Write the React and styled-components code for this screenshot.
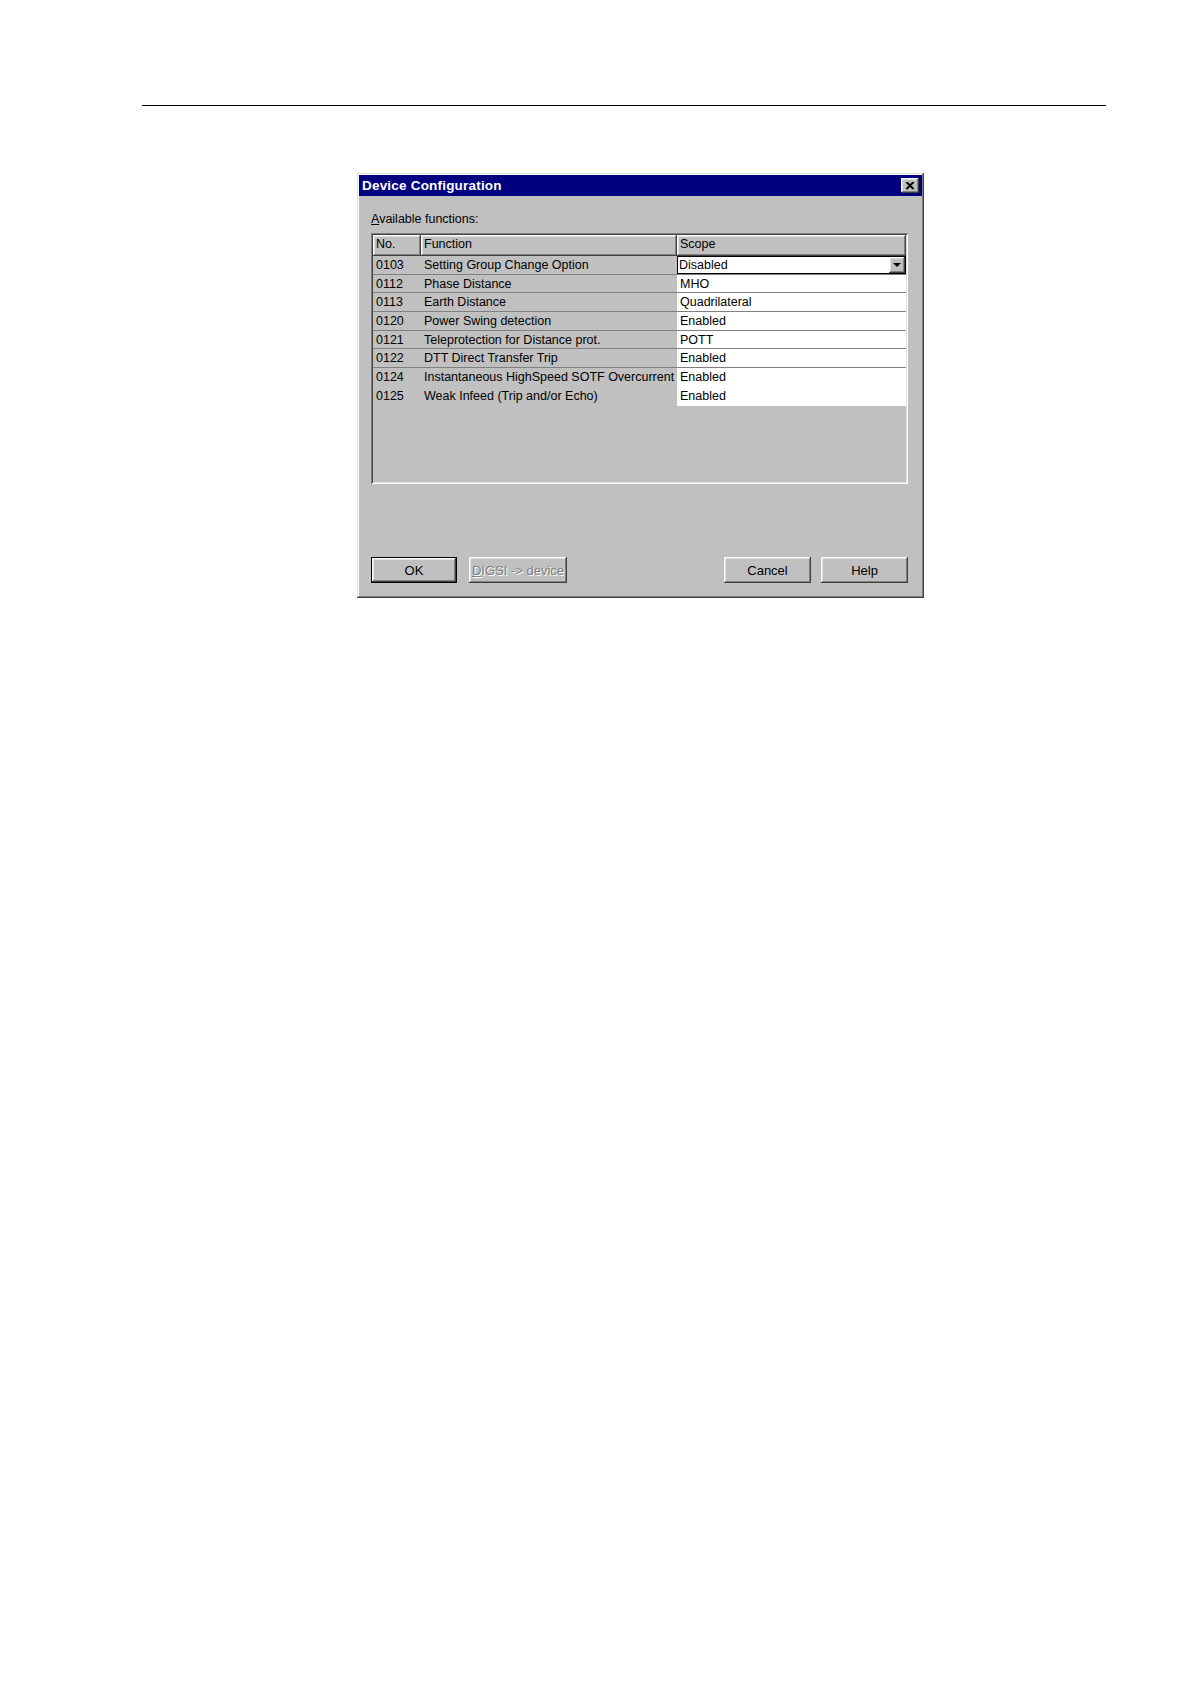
import React from "react";
import styled, { createGlobalStyle } from "styled-components";

const GlobalStyle = createGlobalStyle`
  html, body {
    margin: 0;
    padding: 0;
    background: #ffffff;
  }
  body {
    font-family: "Liberation Sans", Arial, sans-serif;
  }
`;

const raised = `
  box-shadow: inset -1px -1px #404040, inset 1px 1px #ffffff,
    inset -2px -2px #808080, inset 2px 2px #dfdfdf;
`;

const Page = styled.div`
  min-height: 1682px;
  background: #fff;
  padding-top: 105px;
  box-sizing: border-box;
`;

const Rule = styled.div`
  margin-left: 142px;
  width: 964px;
  height: 1px;
  background: #000;
`;

const Dialog = styled.div`
  margin: 67px 0 0 357px;
  width: 567px;
  height: 425px;
  box-sizing: border-box;
  background: #c0c0c0;
  padding: 2px;
  display: flex;
  flex-direction: column;
  box-shadow: inset -1px -1px #404040, inset 1px 1px #dfdfdf,
    inset -2px -2px #808080, inset 2px 2px #ffffff;
`;

const TitleBar = styled.div`
  height: 21px;
  background: #000080;
  display: flex;
  align-items: center;
  justify-content: space-between;
  padding: 0 3px 0 3px;
`;

const Title = styled.span`
  color: #fff;
  font-weight: bold;
  font-size: 13.5px;
  letter-spacing: 0.2px;
`;

const CloseButton = styled.div`
  width: 18px;
  height: 15px;
  background: #c0c0c0;
  display: flex;
  align-items: center;
  justify-content: center;
  ${raised}
`;

const Body = styled.div`
  flex: 1;
  display: flex;
  flex-direction: column;
  padding: 15px 14px 13px 12px;
`;

const Label = styled.div`
  font-size: 12.5px;
  line-height: 16px;
  color: #000;
  margin-bottom: 6px;
  u {
    text-decoration: underline;
  }
`;

const Grid = styled.div`
  height: 251px;
  box-sizing: border-box;
  padding: 2px;
  background: #c0c0c0;
  box-shadow: inset 1px 1px #808080, inset -1px -1px #ffffff,
    inset 2px 2px #404040, inset -2px -2px #dfdfdf;
`;

const HeaderRow = styled.div`
  display: flex;
  height: 21px;
`;

const HeadCell = styled.div`
  width: ${p => p.w}px;
  flex: ${p => (p.grow ? 1 : "none")};
  box-sizing: border-box;
  padding: 0 4px 3px 3px;
  display: flex;
  align-items: center;
  font-size: 12.5px;
  color: #000;
  ${raised}
`;

const Row = styled.div`
  display: flex;
  height: 18.7px;
  box-sizing: border-box;
  border-bottom: ${p => (p.line ? "1px solid #808080" : "none")};
`;

const Cell = styled.div`
  width: ${p => p.w}px;
  flex: none;
  box-sizing: border-box;
  padding-left: ${p => p.pad}px;
  display: flex;
  align-items: center;
  font-size: 12.5px;
  color: #000;
  white-space: nowrap;
`;

const ScopeCell = styled.div`
  flex: 1;
  background: #fff;
  box-sizing: border-box;
  padding-left: 3px;
  display: flex;
  align-items: center;
  font-size: 12.5px;
  color: #000;
`;

const Combo = styled.div`
  flex: 1;
  display: flex;
  align-items: stretch;
  background: #fff;
  border: 1px solid #000;
  box-sizing: border-box;
  font-size: 12.5px;
  color: #000;
`;

const ComboText = styled.span`
  flex: 1;
  display: flex;
  align-items: center;
  padding-left: 1px;
`;

const ComboArrow = styled.div`
  width: 16px;
  background: #c0c0c0;
  display: flex;
  align-items: center;
  justify-content: center;
  ${raised}
  &::after {
    content: "";
    border-left: 4px solid transparent;
    border-right: 4px solid transparent;
    border-top: 4px solid #000;
  }
`;

const ButtonBar = styled.div`
  margin-top: auto;
  display: flex;
  align-items: center;
`;

const Button = styled.div`
  width: ${p => p.w}px;
  height: 26px;
  box-sizing: border-box;
  margin-right: ${p => p.gap || 0}px;
  margin-left: ${p => (p.push ? "auto" : "0")};
  background: #c0c0c0;
  display: flex;
  align-items: center;
  justify-content: center;
  font-size: 13px;
  white-space: nowrap;
  color: ${p => (p.disabled ? "#808080" : "#000")};
  text-shadow: ${p => (p.disabled ? "1px 1px #ffffff" : "none")};
  ${p =>
    p.primary
      ? `box-shadow: inset 0 0 0 1px #000, inset -2px -2px #404040, inset 2px 2px #ffffff,
    inset -3px -3px #808080, inset 3px 3px #dfdfdf;`
      : raised}
`;

const rows = [
  ["0103", "Setting Group Change Option", "Disabled"],
  ["0112", "Phase Distance", "MHO"],
  ["0113", "Earth Distance", "Quadrilateral"],
  ["0120", "Power Swing detection", "Enabled"],
  ["0121", "Teleprotection for Distance prot.", "POTT"],
  ["0122", "DTT Direct Transfer Trip", "Enabled"],
  ["0124", "Instantaneous HighSpeed SOTF Overcurrent", "Enabled"],
  ["0125", "Weak Infeed (Trip and/or Echo)", "Enabled"],
];

export default function App() {
  return (
    <Page>
      <GlobalStyle />
      <Rule />
      <Dialog>
        <TitleBar>
          <Title>Device Configuration</Title>
          <CloseButton>
            <svg width="9" height="8" viewBox="0 0 9 8">
              <path d="M1 0 L8 7 M8 0 L1 7 M0 0 L7 7 M7 0 L0 7" stroke="#000" strokeWidth="1.3" />
            </svg>
          </CloseButton>
        </TitleBar>
        <Body>
          <Label>
            <u>A</u>vailable functions:
          </Label>
          <Grid>
            <HeaderRow>
              <HeadCell w={48}>No.</HeadCell>
              <HeadCell w={256}>Function</HeadCell>
              <HeadCell grow>Scope</HeadCell>
            </HeaderRow>
            {rows.map(([no, fn, scope], i) => (
              <Row key={no} line={i < 6}>
                <Cell w={48} pad={3}>{no}</Cell>
                <Cell w={256} pad={3}>{fn}</Cell>
                {i === 0 ? (
                  <Combo>
                    <ComboText>{scope}</ComboText>
                    <ComboArrow />
                  </Combo>
                ) : (
                  <ScopeCell>{scope}</ScopeCell>
                )}
              </Row>
            ))}
          </Grid>
          <ButtonBar>
            <Button w={86} gap={12} primary>OK</Button>
            <Button w={98} disabled>
              <span><u>D</u>IGSI -&gt; device</span>
            </Button>
            <Button w={87} gap={10} push>Cancel</Button>
            <Button w={87}>Help</Button>
          </ButtonBar>
        </Body>
      </Dialog>
    </Page>
  );
}
